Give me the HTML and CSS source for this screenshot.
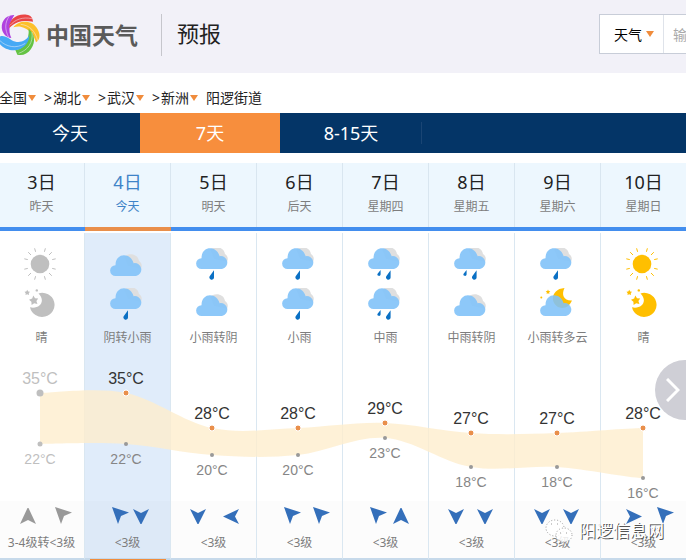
FILE: index.html
```html
<!DOCTYPE html>
<html lang="zh-CN">
<head>
  <meta charset="UTF-8">
  <title>阳逻街道天气预报</title>
  <link rel="stylesheet" href="styles.css">
</head>
<body>
  <!-- shared icons -->
  <svg class="defs" aria-hidden="true">
    <symbol id="sun" viewBox="0 0 32 32">
      <circle cx="16" cy="16" r="9.3" fill="currentColor"/>
      <path stroke="currentColor" d="M11.6 3.8L10.6 0.3M20.4 3.8L21.4 0.3M25 7L27.8 4.2M28.2 11.6L31.7 10.8M28.2 20.4L31.7 21.2M25 25L27.8 27.8M20.4 28.2L21.4 31.7M11.6 28.2L10.6 31.7M7 25L4.2 27.8M3.8 20.4L0.3 21.2M3.8 11.6L0.3 10.8M7 7L4.2 4.2"/>
    </symbol>
    <symbol id="moon" viewBox="0 0 32 32">
      <path fill="currentColor" d="M14.5 5.4A12.4 12 0 1 1 6 19.3C16 21.5 22 12.5 14.5 5.4Z"/>
      <path fill="currentColor" d="M9.3 7.4L11 10.2L14.2 10.4L12.4 13L13.4 16L10.2 15.2L7.6 17L7.4 13.8L5 11.8L8.2 10.6ZM3.2 1.8L4.2 3.4L6 3.8L4.8 5.2L5 7L3.2 6.2L1.5 7L1.7 5.2L0.5 3.8L2.3 3.4Z"/>
      <circle cx="12.8" cy="2.4" r="1.2" fill="currentColor"/>
    </symbol>
    <symbol id="clouds" viewBox="0 0 32 22">
      <path fill="#dfdfdf" d="M14 3C18-1.6 28-.6 29 7C32 9 32.4 12 31 15L18 12Z"/>
      <path fill="#86c5f9" fill-opacity=".94" d="M5.5 22A5.4 5.4 0 0 1 5.5 11.2C5.5 -1.5 20.5 -1.8 23.6 9.2A6.4 6.4 0 0 1 26 22Z"/>
    </symbol>
    <symbol id="overcast" viewBox="0 0 32 32">
      <use href="#clouds" y="6" width="32" height="22"/>
    </symbol>
    <symbol id="drizzle" viewBox="0 0 32 32">
      <use href="#clouds" y="-1" width="32" height="22"/>
      <path fill="#0a70c4" d="M18 22.3V29.5A2.3 2.3 0 1 1 13.7 28.3Z"/>
    </symbol>
    <symbol id="rain" viewBox="0 0 32 32">
      <use href="#clouds" y="-1" width="32" height="22"/>
      <path fill="#0a70c4" d="M22.6 22.3V29.5A2.3 2.3 0 1 1 18.3 28.3ZM12.6 22V26.5A1.6 1.6 0 1 1 9.4 26Z"/>
    </symbol>
    <symbol id="cloudy-night" viewBox="0 0 32 32">
      <path fill="#ffbf00" d="M24.5 0C21 7 24 13 32 12.5C30 17 27 20 22 20C10 19 9 1 24.5 0ZM8 1.5L8.7 3L10.3 3.2L9.1 4.4L9.4 6L8 5.2L6.6 6L6.9 4.4L5.7 3.2L7.3 3Z"/>
      <circle cx="1.3" cy="9.4" r="1" fill="#ffbf00"/>
      <path fill="#7fc2f8" fill-opacity=".88" d="M5.5 28A5.4 5.4 0 0 1 5.5 17.2C5.5 4.5 20.5 4.2 23.6 15.2A6.4 6.4 0 0 1 26 28Z"/>
    </symbol>
    <symbol id="w-down" viewBox="0 0 29 18"><path d="M0 2L8 6L16 2L8.500 17H7.500Z"/></symbol>
    <symbol id="w-up" viewBox="0 0 29 18"><path d="M9.500 1H10.500L18 17L10 13L2 17Z"/></symbol>
    <symbol id="w-left" viewBox="0 0 29 18"><path d="M4 9.500L20 2L16 9.500L20 17Z"/></symbol>
    <symbol id="w-right" viewBox="0 0 29 18"><path d="M6 2L22 9.500L6 17L10 9.500Z"/></symbol>
    <symbol id="w-nw" viewBox="0 0 29 18"><path d="M8 0L25 5.500L17 9L14 17Z"/></symbol>
  </svg>

  <header class="header">
    <a class="logo" href="#">
      <svg class="logo-mark" viewBox="0 42 120 126" aria-hidden="true">
        <path fill="#b042df" d="M43 45C14 44 0 70 7 92C12 104 20 112 34 114C24 92 28 68 43 45Z"/>
        <path fill="#ea4545" d="M28 84C26 60 48 40 80 44C92 46 98 52 99 65C76 60 48 62 28 84Z"/>
        <path fill="#fdc02b" d="M40 82C56 60 98 58 113 88C121 103 121 118 108 127C102 106 88 86 62 80C54 78 48 80 40 82Z"/>
        <path fill="#64c343" d="M86 86C104 100 108 125 93 147C82 162 68 168 52 164L46 150C72 146 88 122 86 86Z"/>
        <path fill="#45a9f5" d="M-2 110C12 104 26 114 34 120C54 132 76 126 88 106C88 132 66 151 42 151C24 151 6 142 -2 130Z"/>
        <path class="logo-line" d="M28 48C14 68 14 88 26 112M30 76C46 58 68 50 96 56M62 73C90 76 106 94 113 122M96 96C100 128 84 150 56 160M0 122C18 140 48 148 76 130"/>
      </svg>
      <span class="logo-text">中国天气</span>
    </a>
    <h1 class="title">预报</h1>
    <form class="search">
      <span class="search-type">
        <select aria-label="搜索类型">
          <option>天气</option>
        </select>
      </span>
      <input class="search-input" type="text" aria-label="搜索" placeholder="输入城市、乡镇、街道">
    </form>
  </header>

  <nav class="crumbs">
    <a class="drop" href="#">全国</a>
    <a class="drop sep" href="#">湖北</a>
    <a class="drop sep" href="#">武汉</a>
    <a class="drop sep" href="#">新洲</a>
    <span class="here">阳逻街道</span>
  </nav>

  <nav class="tabs">
    <a href="#">今天</a>
    <a class="active" href="#">7天</a>
    <a href="#">8-15天</a>
  </nav>

  <main class="week">
    <ul class="days">
      <li class="day past">
        <button class="date"><b>3日</b><span>昨天</span></button>
        <div class="info">
          <div class="icons"><svg><use href="#sun"/></svg><svg><use href="#moon"/></svg></div>
          <p class="wea">晴</p>
          <div class="wind">
            <div class="arrows"><svg><use href="#w-up"/></svg><svg><use href="#w-nw"/></svg></div>
            <p>3-4级转&lt;3级</p>
          </div>
        </div>
      </li>
      <li class="day today">
        <button class="date"><b>4日</b><span>今天</span></button>
        <div class="info">
          <div class="icons"><svg><use href="#overcast"/></svg><svg><use href="#drizzle"/></svg></div>
          <p class="wea">阴转小雨</p>
          <div class="wind">
            <div class="arrows"><svg><use href="#w-nw"/></svg><svg><use href="#w-down"/></svg></div>
            <p>&lt;3级</p>
          </div>
        </div>
      </li>
      <li class="day">
        <button class="date"><b>5日</b><span>明天</span></button>
        <div class="info">
          <div class="icons"><svg><use href="#drizzle"/></svg><svg><use href="#overcast"/></svg></div>
          <p class="wea">小雨转阴</p>
          <div class="wind">
            <div class="arrows"><svg><use href="#w-down"/></svg><svg><use href="#w-left"/></svg></div>
            <p>&lt;3级</p>
          </div>
        </div>
      </li>
      <li class="day">
        <button class="date"><b>6日</b><span>后天</span></button>
        <div class="info">
          <div class="icons"><svg><use href="#drizzle"/></svg><svg><use href="#drizzle"/></svg></div>
          <p class="wea">小雨</p>
          <div class="wind">
            <div class="arrows"><svg><use href="#w-nw"/></svg><svg><use href="#w-nw"/></svg></div>
            <p>&lt;3级</p>
          </div>
        </div>
      </li>
      <li class="day">
        <button class="date"><b>7日</b><span>星期四</span></button>
        <div class="info">
          <div class="icons"><svg><use href="#rain"/></svg><svg><use href="#rain"/></svg></div>
          <p class="wea">中雨</p>
          <div class="wind">
            <div class="arrows"><svg><use href="#w-nw"/></svg><svg><use href="#w-up"/></svg></div>
            <p>&lt;3级</p>
          </div>
        </div>
      </li>
      <li class="day">
        <button class="date"><b>8日</b><span>星期五</span></button>
        <div class="info">
          <div class="icons"><svg><use href="#rain"/></svg><svg><use href="#overcast"/></svg></div>
          <p class="wea">中雨转阴</p>
          <div class="wind">
            <div class="arrows"><svg><use href="#w-down"/></svg><svg><use href="#w-down"/></svg></div>
            <p>&lt;3级</p>
          </div>
        </div>
      </li>
      <li class="day">
        <button class="date"><b>9日</b><span>星期六</span></button>
        <div class="info">
          <div class="icons"><svg><use href="#drizzle"/></svg><svg><use href="#cloudy-night"/></svg></div>
          <p class="wea">小雨转多云</p>
          <div class="wind">
            <div class="arrows"><svg><use href="#w-down"/></svg><svg><use href="#w-down"/></svg></div>
            <p>&lt;3级</p>
          </div>
        </div>
      </li>
      <li class="day">
        <button class="date"><b>10日</b><span>星期日</span></button>
        <div class="info">
          <div class="icons"><svg><use href="#sun"/></svg><svg><use href="#moon"/></svg></div>
          <p class="wea">晴</p>
          <div class="wind">
            <div class="arrows"><svg><use href="#w-right"/></svg><svg><use href="#w-nw"/></svg></div>
            <p>&lt;3级</p>
          </div>
        </div>
      </li>
    </ul>

    <!-- temperature range, lies over the day columns -->
    <svg class="chart" viewBox="0 360 688 140">
      <path class="band" d="M40 393C54 393 97 387 126 393C155 399 183 422 212 428C241 434 269 429 298 428C327 427 355 422 385 423C413 424 441 431 471 433C499 435 527 434 557 433C585 432 628 428 643 428V478C628 478 586 469 557 467C528 465 500 472 471 467C442 462 414 440 385 438C356 436 327 452 298 455C269 458 241 457 212 455C183 453 155 446 126 444C97 442 54 444 40 444Z"/>
      <g class="old">
        <circle cx="40" cy="393" r="3.5"/><circle cx="40" cy="444" r="2.5"/>
        <text class="hi" x="40" y="384">35°C</text><text class="lo" x="40" y="464">22°C</text>
      </g>
      <g class="dot-hi">
        <circle cx="126" cy="393" r="3"/><circle cx="212" cy="428" r="3"/><circle cx="298" cy="428" r="3"/><circle cx="385" cy="423" r="3"/><circle cx="471" cy="433" r="3"/><circle cx="557" cy="433" r="3"/><circle cx="643" cy="428" r="3"/>
      </g>
      <g class="dot-lo">
        <circle cx="126" cy="444" r="2"/><circle cx="212" cy="455" r="2"/><circle cx="298" cy="455" r="2"/><circle cx="385" cy="438" r="2"/><circle cx="471" cy="467" r="2"/><circle cx="557" cy="467" r="2"/><circle cx="643" cy="478" r="2"/>
      </g>
      <g class="hi">
        <text x="126" y="384">35°C</text><text x="212" y="419">28°C</text><text x="298" y="419">28°C</text><text x="385" y="414">29°C</text><text x="471" y="424">27°C</text><text x="557" y="424">27°C</text><text x="643" y="419">28°C</text>
      </g>
      <g class="lo">
        <text x="126" y="464">22°C</text><text x="212" y="475">20°C</text><text x="298" y="475">20°C</text><text x="385" y="458">23°C</text><text x="471" y="487">18°C</text><text x="557" y="487">18°C</text><text x="643" y="498">16°C</text>
      </g>
    </svg>

    <button class="next" aria-label="下一页">
      <svg viewBox="0 0 14 24"><path d="M1 1L12 12L1 23"/></svg>
    </button>

    <div class="mark">
      <svg viewBox="0 0 28 24" aria-hidden="true">
        <ellipse cx="10" cy="9" rx="9" ry="8"/>
        <ellipse cx="19" cy="16" rx="8" ry="7"/>
        <path d="M6 5h2M12 5h2M15 14h2M21 14h2"/>
      </svg>
      <span>阳逻信息网</span>
    </div>
  </main>
</body>
</html>
```
FILE: styles.css
```css
* {
  box-sizing: border-box;
}
body {
  margin: 0;
  font-family: "Noto Sans", "Noto Sans CJK SC", sans-serif;
  font-size: 14px;
  color: #222;
  background: #fff;
  overflow: hidden;
}
a {
  color: inherit;
  text-decoration: none;
}
ul, p, h1 {
  margin: 0;
  padding: 0;
  font-weight: normal;
}
ul {
  list-style: none;
}
button {
  padding: 0;
  border: 0;
  font-family: inherit;
  cursor: pointer;
}
.defs {
  position: absolute;
  width: 0;
  height: 0;
}

/* header */
.header {
  display: flex;
  align-items: flex-start;
  height: 73px;
  padding-top: 14px;
  background: #f2f1f8;
  overflow: hidden;
}
.logo {
  display: flex;
  align-items: center;
  height: 42px;
  padding-right: 23px;
  border-right: 1px solid #c6c6cc;
}
.logo-mark {
  width: 40px;
  height: 42px;
}
.logo-line {
  fill: none;
  stroke: #f2f1f8;
  stroke-width: 1.5;
}
.logo-text {
  margin-left: 6px;
  font-size: 23px;
  font-weight: 700;
  line-height: 42px;
  color: #5a5a5a;
}
.title {
  padding-left: 15px;
  font-size: 22px;
  line-height: 38px;
}
.search {
  display: flex;
  flex: none;
  width: 240px;
  height: 40px;
  margin: 0 -153px 0 auto;
  border: 1px solid #c8cdd8;
  background: #fff;
}
.search-type {
  display: flex;
  align-items: center;
  width: 64px;
  padding-left: 14px;
  border-right: 1px solid #dfe3ea;
}
.search-type select {
  width: 28px;
  padding: 0;
  border: 0;
  background: none;
  appearance: none;
  font: inherit;
  color: #000;
}
.search-type::after,
.drop::after {
  content: "";
  border: 4px solid transparent;
  border-top: 6px solid #f08c3c;
  border-bottom: 0;
}
.search-type::after {
  margin-left: 4px;
}
.search-input {
  flex: 1;
  min-width: 0;
  padding: 0 9px;
  border: 0;
  font: inherit;
}
.search-input::placeholder {
  color: #aaa;
}

/* breadcrumb */
.crumbs {
  display: flex;
  height: 40px;
  padding-top: 10px;
  margin-left: -1px;
  line-height: 30px;
}
.drop {
  display: flex;
  align-items: center;
}
.drop::after {
  margin-left: 1px;
}
.sep::before {
  content: ">";
  margin: 0 1px 0 8px;
}
.here {
  margin-left: 8px;
}

/* tabs */
.tabs {
  display: flex;
  height: 40px;
  margin-bottom: 10px;
  background: #043567;
  color: #fff;
  font-size: 18px;
  line-height: 40px;
  text-align: center;
}
.tabs a {
  width: 140px;
}
.tabs a:last-child {
  width: 142px;
  background: linear-gradient(#1a4574, #1a4574) right center / 1px 22px no-repeat;
}
.tabs .active {
  background: #f78e3d;
}

/* seven day list */
.week {
  position: relative;
  overflow: hidden;
}
.days {
  display: grid;
  grid-template-columns: repeat(8, 86px);
  margin-left: -1px;
}
.day {
  color: #7d7d7d;
  font-size: 12px;
  text-align: center;
}
.date {
  --bar: #438eee;
  display: flex;
  flex-direction: column;
  align-items: center;
  width: 100%;
  height: 68px;
  padding: 5px 1px 0 0;
  background:
    linear-gradient(var(--bar), var(--bar)) bottom / 100% 4px no-repeat,
    linear-gradient(#d9e6f0, #d9e6f0) right / 1px 100% no-repeat,
    #edf7fe;
  color: #7d7d7d;
  font-size: 12px;
}
.date b {
  font-size: 18px;
  font-weight: normal;
  line-height: 28px;
  color: #222;
}
.date span {
  line-height: 22px;
}
.info {
  position: relative;
  height: 327px;
  margin-top: 2px;
  padding-top: 15px;
  border-right: 1px solid #dae7f1;
  border-bottom: 2px solid #c6d9ea;
}
.icons {
  display: flex;
  flex-direction: column;
  align-items: center;
  gap: 8px;
  padding-right: 3px;
  color: #ffbf00;
}
.icons svg {
  width: 32px;
  height: 32px;
}
.wea {
  margin-top: 8px;
  line-height: 20px;
}
.wind {
  height: 57px;
  margin-top: 153px;
  padding-top: 6px;
  background: rgba(0, 0, 0, 0.01);
}
.arrows {
  display: flex;
  padding-left: 19px;
  fill: #346fba;
}
.arrows svg {
  width: 29px;
  height: 18px;
}
.wind p {
  margin-top: 8px;
  line-height: 20px;
  white-space: nowrap;
}
.past .icons {
  color: #bfbfbf;
}
.past .arrows {
  fill: #999;
}
.today .date {
  --bar: #e98f4b;
  color: #3f84c8;
}
.today .date b {
  color: #3f84c8;
}
.today .info {
  background: #e0ecfa;
}
.today .info::after {
  content: "";
  position: absolute;
  left: 5px;
  right: 4px;
  bottom: -2px;
  height: 1px;
  background: #f08c3c;
}

/* temperature chart */
.chart {
  position: absolute;
  top: 197px;
  left: 0;
  width: 688px;
  height: 140px;
  font-family: "Liberation Sans", Arial, sans-serif;
  text-anchor: middle;
}
.band {
  fill: #feedcd;
  fill-opacity: 0.8;
}
.hi {
  font-size: 16px;
  fill: #333;
}
.lo {
  font-size: 14px;
  fill: #868686;
}
.dot-hi {
  fill: #e98f4b;
  stroke: #fff;
  stroke-width: 1;
}
.dot-lo {
  fill: #999;
}
.old,
.old text {
  fill: #bfbfbf;
}

.next {
  position: absolute;
  top: 197px;
  right: -29px;
  width: 60px;
  height: 60px;
  border-radius: 50%;
  background: #cfcfd6;
}
.next svg {
  display: block;
  width: 14px;
  height: 24px;
  margin-left: 11px;
  fill: none;
  stroke: #fff;
  stroke-width: 3;
}
.mark {
  position: absolute;
  right: 22px;
  bottom: 16px;
  display: flex;
  align-items: center;
  gap: 6px;
  color: #fff;
  font-size: 17px;
  line-height: 26px;
  text-shadow: 1px 1px 0 #555;
}
.mark svg {
  width: 28px;
  height: 24px;
  fill: rgba(255, 255, 255, 0.85);
  stroke: #999;
  stroke-width: 1;
  stroke-dasharray: 1 2;
}
```
